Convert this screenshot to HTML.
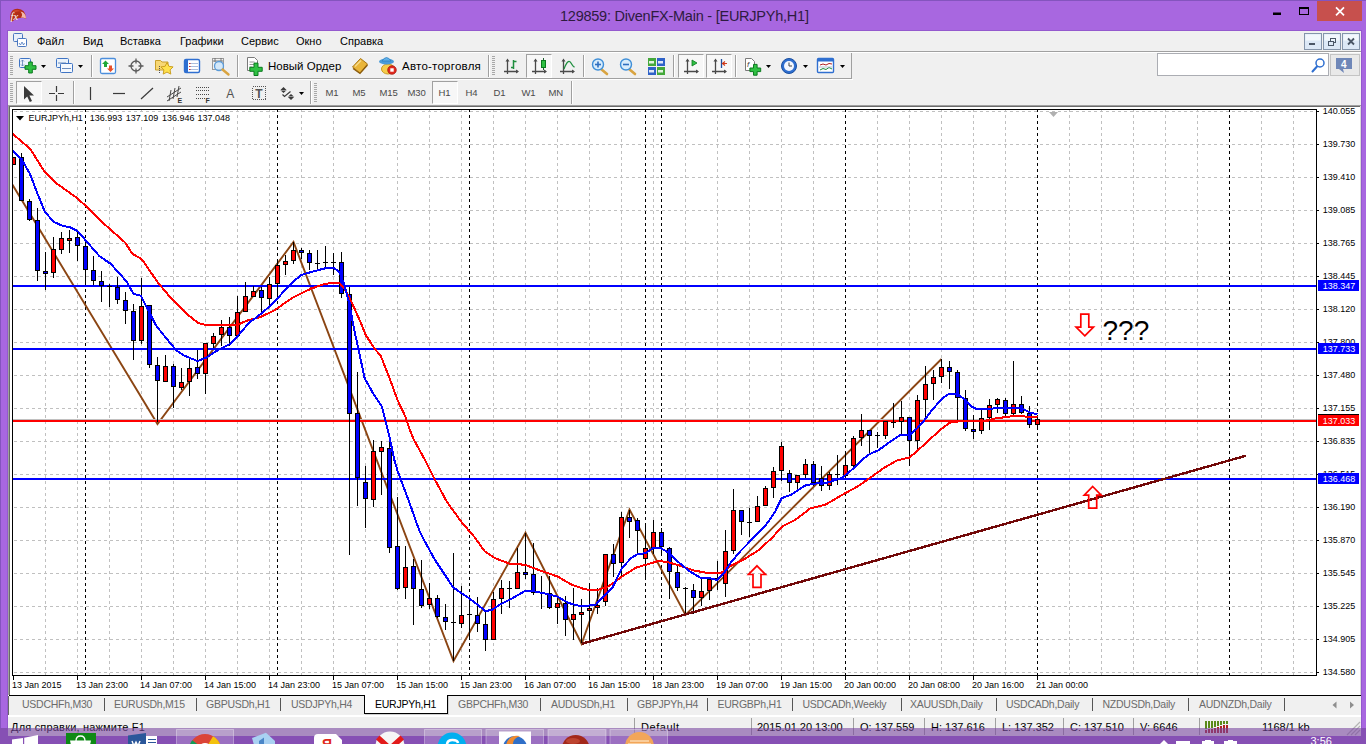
<!DOCTYPE html>
<html><head><meta charset="utf-8"><title>129859: DivenFX-Main - [EURJPYh,H1]</title>
<style>
html,body{margin:0;padding:0;background:#fff;}
body{width:1369px;height:744px;overflow:hidden;position:relative;font-family:"Liberation Sans",sans-serif;}
.a{position:absolute;}
.t{position:absolute;white-space:nowrap;line-height:1;}
#win{left:0;top:0;width:1366px;height:744px;background:#A867E0;}
#client{left:8px;top:31px;width:1353px;height:713px;background:#F0F0F0;}
.menu{font-size:11px;color:#000;top:36px;}
.tb{font-size:11.5px;color:#000;top:60.5px;}
.tf{font-size:9.5px;color:#4a4a4a;top:88px;margin-left:-0.6px;}
.tab{font-size:10.5px;color:#6b6b6b;top:699px;letter-spacing:-0.25px;}
.sep{position:absolute;width:1px;height:22px;background:#A0A0A0;box-shadow:1px 0 0 #fff;}
.tsep{position:absolute;width:1px;height:13px;top:698px;background:#555;}
.st{font-size:11px;color:#000;top:722px;}
.ssep{position:absolute;width:1px;height:17px;top:718px;background:#A0A0A0;}
.grip{position:absolute;width:3px;height:20px;background:repeating-linear-gradient(#A8A8A8 0 1px,#F0F0F0 1px 2px);}
.pressed{position:absolute;border:1px solid #A0A0A0;border-right-color:#fff;border-bottom-color:#fff;background:#F7F7F7;box-sizing:border-box;}
svg{position:absolute;left:0;top:0;overflow:visible;}
</style></head><body>

<div id="win" class="a"></div>
<div class="a" style="left:0;top:0;width:1366px;height:1px;background:#8454BE"></div>
<div class="t" id="title" style="left:560px;top:9px;font-size:14.5px;color:#2E1B40;letter-spacing:-0.24px">129859: DivenFX-Main - [EURJPYh,H1]</div>
<div class="a" style="left:1317px;top:1px;width:45px;height:20px;background:#C7504D"></div>
<div class="a" style="left:0;top:0;width:1px;height:744px;background:#8454BE"></div>
<div class="a" style="left:7px;top:30px;width:1355px;height:714px;background:#9459CE"></div>
<div id="client" class="a"></div>
<div class="a" style="left:8px;top:51px;width:1353px;height:1px;background:#A0A0A0"></div>
<div class="a" style="left:8px;top:52px;width:1353px;height:1px;background:#fff"></div>
<div class="t menu" style="left:37px">Файл</div>
<div class="t menu" style="left:83px">Вид</div>
<div class="t menu" style="left:120px">Вставка</div>
<div class="t menu" style="left:180px">Графики</div>
<div class="t menu" style="left:241px">Сервис</div>
<div class="t menu" style="left:296px">Окно</div>
<div class="t menu" style="left:340px">Справка</div>
<div class="a" style="left:8px;top:78px;width:844px;height:1px;background:#A0A0A0"></div>
<div class="a" style="left:8px;top:79px;width:845px;height:1px;background:#fff"></div>
<div class="a" style="left:851px;top:53px;width:1px;height:26px;background:#A0A0A0"></div>
<div class="grip" style="left:10px;top:56px"></div>
<div class="grip" style="left:492px;top:56px"></div>
<div class="sep" style="left:91px;top:55px"></div>
<div class="sep" style="left:237px;top:55px"></div>
<div class="sep" style="left:488px;top:55px"></div>
<div class="sep" style="left:583px;top:55px"></div>
<div class="sep" style="left:673px;top:55px"></div>
<div class="sep" style="left:735px;top:55px"></div>
<div class="pressed" style="left:526px;top:54px;width:26px;height:24px"></div>
<div class="pressed" style="left:678px;top:54px;width:26px;height:24px"></div>
<div class="pressed" style="left:706px;top:54px;width:26px;height:24px"></div>
<div class="t tb" style="left:268px">Новый Ордер</div>
<div class="t tb" style="left:402px;letter-spacing:0.24px">Авто-торговля</div>
<div class="a" style="left:1157px;top:53px;width:172px;height:23px;background:#fff;border:1px solid #ABADB3;box-sizing:border-box"></div>
<div class="a" style="left:1330px;top:54px;width:30px;height:22px;background:#E9E9E9;border:1px solid #C4C4C4;box-sizing:border-box"></div>
<div class="grip" style="left:10px;top:83px"></div>
<div class="grip" style="left:314px;top:83px"></div>
<div class="sep" style="left:73px;top:81px;height:23px"></div>
<div class="sep" style="left:310px;top:81px;height:23px"></div>
<div class="sep" style="left:571px;top:81px;height:23px"></div>
<div class="pressed" style="left:16px;top:81px;width:26px;height:23px"></div>
<div class="pressed" style="left:432px;top:81px;width:26px;height:23px"></div>
<div class="t tf" style="left:326px">M1</div>
<div class="t tf" style="left:353px">M5</div>
<div class="t tf" style="left:380px">M15</div>
<div class="t tf" style="left:408px">M30</div>
<div class="t tf" style="left:439px">H1</div>
<div class="t tf" style="left:466px">H4</div>
<div class="t tf" style="left:494px">D1</div>
<div class="t tf" style="left:522px">W1</div>
<div class="t tf" style="left:549px">MN</div>
<svg width="1369" height="744" viewBox="0 0 1369 744" font-family="Liberation Sans, sans-serif">
<g shape-rendering="crispEdges">
<rect x="8" y="105" width="1353" height="591" fill="#fff"/>
<rect x="8" y="105" width="1353" height="1" fill="#A0A0A0"/>
<rect x="9" y="106" width="1351" height="1" fill="#696969"/>
<rect x="8" y="105" width="1" height="590" fill="#A0A0A0"/>
<rect x="9" y="106" width="1" height="589" fill="#696969"/>
<rect x="1360" y="106" width="1" height="589" fill="#D8D8D8"/>
<rect x="9" y="695" width="1352" height="1" fill="#000"/>
<line x1="14" y1="111.5" x2="1316" y2="111.5" stroke="#C0C0C0" stroke-width="1" stroke-dasharray="3 3"/>
<line x1="14" y1="144.5" x2="1316" y2="144.5" stroke="#C0C0C0" stroke-width="1" stroke-dasharray="3 3"/>
<line x1="14" y1="177.5" x2="1316" y2="177.5" stroke="#C0C0C0" stroke-width="1" stroke-dasharray="3 3"/>
<line x1="14" y1="210.5" x2="1316" y2="210.5" stroke="#C0C0C0" stroke-width="1" stroke-dasharray="3 3"/>
<line x1="14" y1="243.5" x2="1316" y2="243.5" stroke="#C0C0C0" stroke-width="1" stroke-dasharray="3 3"/>
<line x1="14" y1="276.5" x2="1316" y2="276.5" stroke="#C0C0C0" stroke-width="1" stroke-dasharray="3 3"/>
<line x1="14" y1="309.5" x2="1316" y2="309.5" stroke="#C0C0C0" stroke-width="1" stroke-dasharray="3 3"/>
<line x1="14" y1="342.5" x2="1316" y2="342.5" stroke="#C0C0C0" stroke-width="1" stroke-dasharray="3 3"/>
<line x1="14" y1="375.5" x2="1316" y2="375.5" stroke="#C0C0C0" stroke-width="1" stroke-dasharray="3 3"/>
<line x1="14" y1="408.5" x2="1316" y2="408.5" stroke="#C0C0C0" stroke-width="1" stroke-dasharray="3 3"/>
<line x1="14" y1="441.5" x2="1316" y2="441.5" stroke="#C0C0C0" stroke-width="1" stroke-dasharray="3 3"/>
<line x1="14" y1="474.5" x2="1316" y2="474.5" stroke="#C0C0C0" stroke-width="1" stroke-dasharray="3 3"/>
<line x1="14" y1="507.5" x2="1316" y2="507.5" stroke="#C0C0C0" stroke-width="1" stroke-dasharray="3 3"/>
<line x1="14" y1="540.5" x2="1316" y2="540.5" stroke="#C0C0C0" stroke-width="1" stroke-dasharray="3 3"/>
<line x1="14" y1="573.5" x2="1316" y2="573.5" stroke="#C0C0C0" stroke-width="1" stroke-dasharray="3 3"/>
<line x1="14" y1="606.5" x2="1316" y2="606.5" stroke="#C0C0C0" stroke-width="1" stroke-dasharray="3 3"/>
<line x1="14" y1="639.5" x2="1316" y2="639.5" stroke="#C0C0C0" stroke-width="1" stroke-dasharray="3 3"/>
<line x1="14" y1="672.5" x2="1316" y2="672.5" stroke="#C0C0C0" stroke-width="1" stroke-dasharray="3 3"/>
<line x1="45.5" y1="109" x2="45.5" y2="675" stroke="#C0C0C0" stroke-width="1" stroke-dasharray="3 3"/>
<line x1="77.5" y1="109" x2="77.5" y2="675" stroke="#C0C0C0" stroke-width="1" stroke-dasharray="3 3"/>
<line x1="109.5" y1="109" x2="109.5" y2="675" stroke="#C0C0C0" stroke-width="1" stroke-dasharray="3 3"/>
<line x1="141.5" y1="109" x2="141.5" y2="675" stroke="#C0C0C0" stroke-width="1" stroke-dasharray="3 3"/>
<line x1="173.5" y1="109" x2="173.5" y2="675" stroke="#C0C0C0" stroke-width="1" stroke-dasharray="3 3"/>
<line x1="205.5" y1="109" x2="205.5" y2="675" stroke="#C0C0C0" stroke-width="1" stroke-dasharray="3 3"/>
<line x1="237.5" y1="109" x2="237.5" y2="675" stroke="#C0C0C0" stroke-width="1" stroke-dasharray="3 3"/>
<line x1="269.5" y1="109" x2="269.5" y2="675" stroke="#C0C0C0" stroke-width="1" stroke-dasharray="3 3"/>
<line x1="301.5" y1="109" x2="301.5" y2="675" stroke="#C0C0C0" stroke-width="1" stroke-dasharray="3 3"/>
<line x1="333.5" y1="109" x2="333.5" y2="675" stroke="#C0C0C0" stroke-width="1" stroke-dasharray="3 3"/>
<line x1="365.5" y1="109" x2="365.5" y2="675" stroke="#C0C0C0" stroke-width="1" stroke-dasharray="3 3"/>
<line x1="397.5" y1="109" x2="397.5" y2="675" stroke="#C0C0C0" stroke-width="1" stroke-dasharray="3 3"/>
<line x1="429.5" y1="109" x2="429.5" y2="675" stroke="#C0C0C0" stroke-width="1" stroke-dasharray="3 3"/>
<line x1="461.5" y1="109" x2="461.5" y2="675" stroke="#C0C0C0" stroke-width="1" stroke-dasharray="3 3"/>
<line x1="493.5" y1="109" x2="493.5" y2="675" stroke="#C0C0C0" stroke-width="1" stroke-dasharray="3 3"/>
<line x1="525.5" y1="109" x2="525.5" y2="675" stroke="#C0C0C0" stroke-width="1" stroke-dasharray="3 3"/>
<line x1="557.5" y1="109" x2="557.5" y2="675" stroke="#C0C0C0" stroke-width="1" stroke-dasharray="3 3"/>
<line x1="589.5" y1="109" x2="589.5" y2="675" stroke="#C0C0C0" stroke-width="1" stroke-dasharray="3 3"/>
<line x1="621.5" y1="109" x2="621.5" y2="675" stroke="#C0C0C0" stroke-width="1" stroke-dasharray="3 3"/>
<line x1="653.5" y1="109" x2="653.5" y2="675" stroke="#C0C0C0" stroke-width="1" stroke-dasharray="3 3"/>
<line x1="685.5" y1="109" x2="685.5" y2="675" stroke="#C0C0C0" stroke-width="1" stroke-dasharray="3 3"/>
<line x1="717.5" y1="109" x2="717.5" y2="675" stroke="#C0C0C0" stroke-width="1" stroke-dasharray="3 3"/>
<line x1="749.5" y1="109" x2="749.5" y2="675" stroke="#C0C0C0" stroke-width="1" stroke-dasharray="3 3"/>
<line x1="781.5" y1="109" x2="781.5" y2="675" stroke="#C0C0C0" stroke-width="1" stroke-dasharray="3 3"/>
<line x1="813.5" y1="109" x2="813.5" y2="675" stroke="#C0C0C0" stroke-width="1" stroke-dasharray="3 3"/>
<line x1="845.5" y1="109" x2="845.5" y2="675" stroke="#C0C0C0" stroke-width="1" stroke-dasharray="3 3"/>
<line x1="877.5" y1="109" x2="877.5" y2="675" stroke="#C0C0C0" stroke-width="1" stroke-dasharray="3 3"/>
<line x1="909.5" y1="109" x2="909.5" y2="675" stroke="#C0C0C0" stroke-width="1" stroke-dasharray="3 3"/>
<line x1="941.5" y1="109" x2="941.5" y2="675" stroke="#C0C0C0" stroke-width="1" stroke-dasharray="3 3"/>
<line x1="973.5" y1="109" x2="973.5" y2="675" stroke="#C0C0C0" stroke-width="1" stroke-dasharray="3 3"/>
<line x1="1005.5" y1="109" x2="1005.5" y2="675" stroke="#C0C0C0" stroke-width="1" stroke-dasharray="3 3"/>
<line x1="1037.5" y1="109" x2="1037.5" y2="675" stroke="#C0C0C0" stroke-width="1" stroke-dasharray="3 3"/>
<line x1="1069.5" y1="109" x2="1069.5" y2="675" stroke="#C0C0C0" stroke-width="1" stroke-dasharray="3 3"/>
<line x1="1101.5" y1="109" x2="1101.5" y2="675" stroke="#C0C0C0" stroke-width="1" stroke-dasharray="3 3"/>
<line x1="1133.5" y1="109" x2="1133.5" y2="675" stroke="#C0C0C0" stroke-width="1" stroke-dasharray="3 3"/>
<line x1="1165.5" y1="109" x2="1165.5" y2="675" stroke="#C0C0C0" stroke-width="1" stroke-dasharray="3 3"/>
<line x1="1197.5" y1="109" x2="1197.5" y2="675" stroke="#C0C0C0" stroke-width="1" stroke-dasharray="3 3"/>
<line x1="1229.5" y1="109" x2="1229.5" y2="675" stroke="#C0C0C0" stroke-width="1" stroke-dasharray="3 3"/>
<line x1="1261.5" y1="109" x2="1261.5" y2="675" stroke="#C0C0C0" stroke-width="1" stroke-dasharray="3 3"/>
<line x1="1293.5" y1="109" x2="1293.5" y2="675" stroke="#C0C0C0" stroke-width="1" stroke-dasharray="3 3"/>
<line x1="85.5" y1="109" x2="85.5" y2="675" stroke="#000" stroke-width="1" stroke-dasharray="3 3"/>
<line x1="277.5" y1="109" x2="277.5" y2="675" stroke="#000" stroke-width="1" stroke-dasharray="3 3"/>
<line x1="469.5" y1="109" x2="469.5" y2="675" stroke="#000" stroke-width="1" stroke-dasharray="3 3"/>
<line x1="645.5" y1="109" x2="645.5" y2="675" stroke="#000" stroke-width="1" stroke-dasharray="3 3"/>
<line x1="661.5" y1="109" x2="661.5" y2="675" stroke="#000" stroke-width="1" stroke-dasharray="3 3"/>
<line x1="845.5" y1="109" x2="845.5" y2="675" stroke="#000" stroke-width="1" stroke-dasharray="3 3"/>
<line x1="1037.5" y1="109" x2="1037.5" y2="675" stroke="#000" stroke-width="1" stroke-dasharray="3 3"/>
<line x1="1229.5" y1="109" x2="1229.5" y2="675" stroke="#000" stroke-width="1" stroke-dasharray="3 3"/>
</g>
<clipPath id="cc"><rect x="13" y="110" width="1303" height="565"/></clipPath>
<g clip-path="url(#cc)">
<polyline fill="none" stroke="#8B4513" stroke-width="1.9" stroke-linejoin="miter" points="12.0,184.0 157.5,424.0 293.5,242.0 453.5,661.0 525.5,532.8 581.6,643.8 629.5,509.5 685.5,615.0 941.5,359.0"/>
<rect x="13" y="419" width="1303" height="1" fill="#C0C0C0" shape-rendering="crispEdges"/>
<g shape-rendering="crispEdges">
<rect x="13" y="285" width="1303" height="2" fill="#0000FF"/>
<rect x="13" y="348" width="1303" height="2" fill="#0000FF"/>
<rect x="13" y="478" width="1303" height="2" fill="#0000FF"/>
<rect x="13" y="420" width="1303" height="2" fill="#FF0000"/>
</g>
<g shape-rendering="crispEdges">
<rect x="13" y="157" width="1" height="8" fill="#000"/>
<rect x="11" y="157" width="5" height="8" fill="#000"/>
<rect x="12" y="158" width="3" height="6" fill="#FF0000"/>
<rect x="21" y="153" width="1" height="48" fill="#000"/>
<rect x="19" y="157" width="5" height="44" fill="#000"/>
<rect x="20" y="158" width="3" height="42" fill="#0000FF"/>
<rect x="29" y="199" width="1" height="22" fill="#000"/>
<rect x="27" y="201" width="5" height="19" fill="#000"/>
<rect x="28" y="202" width="3" height="17" fill="#0000FF"/>
<rect x="37" y="208" width="1" height="73" fill="#000"/>
<rect x="35" y="220" width="5" height="51" fill="#000"/>
<rect x="36" y="221" width="3" height="49" fill="#0000FF"/>
<rect x="45" y="252" width="1" height="38" fill="#000"/>
<rect x="43" y="271" width="5" height="3" fill="#000"/>
<rect x="44" y="272" width="3" height="1" fill="#0000FF"/>
<rect x="53" y="237" width="1" height="41" fill="#000"/>
<rect x="51" y="249" width="5" height="24" fill="#000"/>
<rect x="52" y="250" width="3" height="22" fill="#FF0000"/>
<rect x="61" y="232" width="1" height="22" fill="#000"/>
<rect x="59" y="238" width="5" height="12" fill="#000"/>
<rect x="60" y="239" width="3" height="10" fill="#FF0000"/>
<rect x="69" y="230" width="1" height="23" fill="#000"/>
<rect x="67" y="238" width="5" height="3" fill="#000"/>
<rect x="68" y="239" width="3" height="1" fill="#FF0000"/>
<rect x="77" y="232" width="1" height="29" fill="#000"/>
<rect x="75" y="237" width="5" height="9" fill="#000"/>
<rect x="76" y="238" width="3" height="7" fill="#0000FF"/>
<rect x="85" y="240" width="1" height="45" fill="#000"/>
<rect x="83" y="246" width="5" height="24" fill="#000"/>
<rect x="84" y="247" width="3" height="22" fill="#0000FF"/>
<rect x="93" y="256" width="1" height="29" fill="#000"/>
<rect x="91" y="270" width="5" height="11" fill="#000"/>
<rect x="92" y="271" width="3" height="9" fill="#0000FF"/>
<rect x="101" y="271" width="1" height="31" fill="#000"/>
<rect x="99" y="281" width="5" height="5" fill="#000"/>
<rect x="100" y="282" width="3" height="3" fill="#0000FF"/>
<rect x="109" y="284" width="1" height="23" fill="#000"/>
<rect x="107" y="286" width="5" height="1" fill="#000"/>
<rect x="117" y="277" width="1" height="27" fill="#000"/>
<rect x="115" y="287" width="5" height="13" fill="#000"/>
<rect x="116" y="288" width="3" height="11" fill="#0000FF"/>
<rect x="125" y="292" width="1" height="32" fill="#000"/>
<rect x="123" y="300" width="5" height="11" fill="#000"/>
<rect x="124" y="301" width="3" height="9" fill="#0000FF"/>
<rect x="133" y="304" width="1" height="56" fill="#000"/>
<rect x="131" y="311" width="5" height="30" fill="#000"/>
<rect x="132" y="312" width="3" height="28" fill="#0000FF"/>
<rect x="141" y="278" width="1" height="66" fill="#000"/>
<rect x="139" y="306" width="5" height="35" fill="#000"/>
<rect x="140" y="307" width="3" height="33" fill="#FF0000"/>
<rect x="149" y="305" width="1" height="63" fill="#000"/>
<rect x="147" y="305" width="5" height="60" fill="#000"/>
<rect x="148" y="306" width="3" height="58" fill="#0000FF"/>
<rect x="157" y="357" width="1" height="65" fill="#000"/>
<rect x="155" y="365" width="5" height="16" fill="#000"/>
<rect x="156" y="366" width="3" height="14" fill="#0000FF"/>
<rect x="165" y="355" width="1" height="27" fill="#000"/>
<rect x="163" y="366" width="5" height="16" fill="#000"/>
<rect x="164" y="367" width="3" height="14" fill="#FF0000"/>
<rect x="173" y="364" width="1" height="44" fill="#000"/>
<rect x="171" y="366" width="5" height="21" fill="#000"/>
<rect x="172" y="367" width="3" height="19" fill="#0000FF"/>
<rect x="181" y="368" width="1" height="22" fill="#000"/>
<rect x="179" y="382" width="5" height="6" fill="#000"/>
<rect x="180" y="383" width="3" height="4" fill="#FF0000"/>
<rect x="189" y="358" width="1" height="38" fill="#000"/>
<rect x="187" y="368" width="5" height="14" fill="#000"/>
<rect x="188" y="369" width="3" height="12" fill="#FF0000"/>
<rect x="197" y="350" width="1" height="29" fill="#000"/>
<rect x="195" y="367" width="5" height="7" fill="#000"/>
<rect x="196" y="368" width="3" height="5" fill="#0000FF"/>
<rect x="205" y="343" width="1" height="51" fill="#000"/>
<rect x="203" y="343" width="5" height="31" fill="#000"/>
<rect x="204" y="344" width="3" height="29" fill="#FF0000"/>
<rect x="213" y="333" width="1" height="15" fill="#000"/>
<rect x="211" y="336" width="5" height="8" fill="#000"/>
<rect x="212" y="337" width="3" height="6" fill="#FF0000"/>
<rect x="221" y="320" width="1" height="26" fill="#000"/>
<rect x="219" y="327" width="5" height="8" fill="#000"/>
<rect x="220" y="328" width="3" height="6" fill="#FF0000"/>
<rect x="229" y="317" width="1" height="29" fill="#000"/>
<rect x="227" y="327" width="5" height="9" fill="#000"/>
<rect x="228" y="328" width="3" height="7" fill="#0000FF"/>
<rect x="237" y="296" width="1" height="40" fill="#000"/>
<rect x="235" y="312" width="5" height="24" fill="#000"/>
<rect x="236" y="313" width="3" height="22" fill="#FF0000"/>
<rect x="245" y="282" width="1" height="30" fill="#000"/>
<rect x="243" y="296" width="5" height="16" fill="#000"/>
<rect x="244" y="297" width="3" height="14" fill="#FF0000"/>
<rect x="253" y="286" width="1" height="11" fill="#000"/>
<rect x="251" y="291" width="5" height="6" fill="#000"/>
<rect x="252" y="292" width="3" height="4" fill="#FF0000"/>
<rect x="261" y="287" width="1" height="27" fill="#000"/>
<rect x="259" y="290" width="5" height="8" fill="#000"/>
<rect x="260" y="291" width="3" height="6" fill="#0000FF"/>
<rect x="269" y="277" width="1" height="28" fill="#000"/>
<rect x="267" y="284" width="5" height="15" fill="#000"/>
<rect x="268" y="285" width="3" height="13" fill="#FF0000"/>
<rect x="277" y="259" width="1" height="38" fill="#000"/>
<rect x="275" y="265" width="5" height="19" fill="#000"/>
<rect x="276" y="266" width="3" height="17" fill="#FF0000"/>
<rect x="285" y="255" width="1" height="20" fill="#000"/>
<rect x="283" y="261" width="5" height="4" fill="#000"/>
<rect x="284" y="262" width="3" height="2" fill="#FF0000"/>
<rect x="293" y="242" width="1" height="22" fill="#000"/>
<rect x="291" y="250" width="5" height="11" fill="#000"/>
<rect x="292" y="251" width="3" height="9" fill="#FF0000"/>
<rect x="301" y="248" width="1" height="11" fill="#000"/>
<rect x="299" y="250" width="5" height="3" fill="#000"/>
<rect x="300" y="251" width="3" height="1" fill="#0000FF"/>
<rect x="309" y="250" width="1" height="20" fill="#000"/>
<rect x="307" y="253" width="5" height="10" fill="#000"/>
<rect x="308" y="254" width="3" height="8" fill="#0000FF"/>
<rect x="317" y="250" width="1" height="19" fill="#000"/>
<rect x="315" y="263" width="5" height="1" fill="#000"/>
<rect x="325" y="246" width="1" height="22" fill="#000"/>
<rect x="323" y="262" width="5" height="1" fill="#000"/>
<rect x="333" y="253" width="1" height="22" fill="#000"/>
<rect x="331" y="262" width="5" height="1" fill="#000"/>
<rect x="341" y="252" width="1" height="46" fill="#000"/>
<rect x="339" y="262" width="5" height="32" fill="#000"/>
<rect x="340" y="263" width="3" height="30" fill="#0000FF"/>
<rect x="349" y="287" width="1" height="268" fill="#000"/>
<rect x="347" y="294" width="5" height="120" fill="#000"/>
<rect x="348" y="295" width="3" height="118" fill="#0000FF"/>
<rect x="357" y="372" width="1" height="134" fill="#000"/>
<rect x="355" y="413" width="5" height="65" fill="#000"/>
<rect x="356" y="414" width="3" height="63" fill="#0000FF"/>
<rect x="365" y="466" width="1" height="62" fill="#000"/>
<rect x="363" y="482" width="5" height="17" fill="#000"/>
<rect x="364" y="483" width="3" height="15" fill="#0000FF"/>
<rect x="373" y="440" width="1" height="67" fill="#000"/>
<rect x="371" y="451" width="5" height="49" fill="#000"/>
<rect x="372" y="452" width="3" height="47" fill="#FF0000"/>
<rect x="381" y="441" width="1" height="54" fill="#000"/>
<rect x="379" y="447" width="5" height="5" fill="#000"/>
<rect x="380" y="448" width="3" height="3" fill="#FF0000"/>
<rect x="389" y="442" width="1" height="111" fill="#000"/>
<rect x="387" y="448" width="5" height="100" fill="#000"/>
<rect x="388" y="449" width="3" height="98" fill="#0000FF"/>
<rect x="397" y="497" width="1" height="93" fill="#000"/>
<rect x="395" y="546" width="5" height="43" fill="#000"/>
<rect x="396" y="547" width="3" height="41" fill="#0000FF"/>
<rect x="405" y="546" width="1" height="53" fill="#000"/>
<rect x="403" y="567" width="5" height="21" fill="#000"/>
<rect x="404" y="568" width="3" height="19" fill="#FF0000"/>
<rect x="413" y="559" width="1" height="66" fill="#000"/>
<rect x="411" y="566" width="5" height="23" fill="#000"/>
<rect x="412" y="567" width="3" height="21" fill="#0000FF"/>
<rect x="421" y="560" width="1" height="48" fill="#000"/>
<rect x="419" y="589" width="5" height="17" fill="#000"/>
<rect x="420" y="590" width="3" height="15" fill="#0000FF"/>
<rect x="429" y="583" width="1" height="26" fill="#000"/>
<rect x="427" y="598" width="5" height="7" fill="#000"/>
<rect x="428" y="599" width="3" height="5" fill="#FF0000"/>
<rect x="437" y="595" width="1" height="23" fill="#000"/>
<rect x="435" y="598" width="5" height="19" fill="#000"/>
<rect x="436" y="599" width="3" height="17" fill="#0000FF"/>
<rect x="445" y="604" width="1" height="26" fill="#000"/>
<rect x="443" y="617" width="5" height="5" fill="#000"/>
<rect x="444" y="618" width="3" height="3" fill="#0000FF"/>
<rect x="453" y="553" width="1" height="108" fill="#000"/>
<rect x="451" y="622" width="5" height="1" fill="#000"/>
<rect x="461" y="586" width="1" height="42" fill="#000"/>
<rect x="459" y="615" width="5" height="9" fill="#000"/>
<rect x="460" y="616" width="3" height="7" fill="#FF0000"/>
<rect x="469" y="595" width="1" height="45" fill="#000"/>
<rect x="467" y="614" width="5" height="1" fill="#000"/>
<rect x="477" y="597" width="1" height="35" fill="#000"/>
<rect x="475" y="615" width="5" height="9" fill="#000"/>
<rect x="476" y="616" width="3" height="7" fill="#0000FF"/>
<rect x="485" y="610" width="1" height="41" fill="#000"/>
<rect x="483" y="624" width="5" height="16" fill="#000"/>
<rect x="484" y="625" width="3" height="14" fill="#0000FF"/>
<rect x="493" y="592" width="1" height="48" fill="#000"/>
<rect x="491" y="599" width="5" height="41" fill="#000"/>
<rect x="492" y="600" width="3" height="39" fill="#FF0000"/>
<rect x="501" y="580" width="1" height="34" fill="#000"/>
<rect x="499" y="588" width="5" height="11" fill="#000"/>
<rect x="500" y="589" width="3" height="9" fill="#FF0000"/>
<rect x="509" y="581" width="1" height="27" fill="#000"/>
<rect x="507" y="588" width="5" height="1" fill="#000"/>
<rect x="517" y="548" width="1" height="41" fill="#000"/>
<rect x="515" y="572" width="5" height="17" fill="#000"/>
<rect x="516" y="573" width="3" height="15" fill="#FF0000"/>
<rect x="525" y="533" width="1" height="46" fill="#000"/>
<rect x="523" y="572" width="5" height="3" fill="#000"/>
<rect x="524" y="573" width="3" height="1" fill="#0000FF"/>
<rect x="533" y="543" width="1" height="52" fill="#000"/>
<rect x="531" y="574" width="5" height="19" fill="#000"/>
<rect x="532" y="575" width="3" height="17" fill="#0000FF"/>
<rect x="541" y="576" width="1" height="33" fill="#000"/>
<rect x="539" y="592" width="5" height="1" fill="#000"/>
<rect x="549" y="576" width="1" height="33" fill="#000"/>
<rect x="547" y="593" width="5" height="15" fill="#000"/>
<rect x="548" y="594" width="3" height="13" fill="#0000FF"/>
<rect x="557" y="597" width="1" height="27" fill="#000"/>
<rect x="555" y="603" width="5" height="5" fill="#000"/>
<rect x="556" y="604" width="3" height="3" fill="#FF0000"/>
<rect x="565" y="596" width="1" height="40" fill="#000"/>
<rect x="563" y="603" width="5" height="17" fill="#000"/>
<rect x="564" y="604" width="3" height="15" fill="#0000FF"/>
<rect x="573" y="588" width="1" height="52" fill="#000"/>
<rect x="571" y="614" width="5" height="6" fill="#000"/>
<rect x="572" y="615" width="3" height="4" fill="#FF0000"/>
<rect x="581" y="599" width="1" height="44" fill="#000"/>
<rect x="579" y="612" width="5" height="3" fill="#000"/>
<rect x="580" y="613" width="3" height="1" fill="#FF0000"/>
<rect x="589" y="583" width="1" height="59" fill="#000"/>
<rect x="587" y="608" width="5" height="3" fill="#000"/>
<rect x="588" y="609" width="3" height="1" fill="#FF0000"/>
<rect x="597" y="588" width="1" height="26" fill="#000"/>
<rect x="595" y="605" width="5" height="3" fill="#000"/>
<rect x="596" y="606" width="3" height="1" fill="#FF0000"/>
<rect x="605" y="554" width="1" height="52" fill="#000"/>
<rect x="603" y="554" width="5" height="48" fill="#000"/>
<rect x="604" y="555" width="3" height="46" fill="#FF0000"/>
<rect x="613" y="544" width="1" height="33" fill="#000"/>
<rect x="611" y="554" width="5" height="10" fill="#000"/>
<rect x="612" y="555" width="3" height="8" fill="#0000FF"/>
<rect x="621" y="512" width="1" height="64" fill="#000"/>
<rect x="619" y="517" width="5" height="46" fill="#000"/>
<rect x="620" y="518" width="3" height="44" fill="#FF0000"/>
<rect x="629" y="510" width="1" height="28" fill="#000"/>
<rect x="627" y="517" width="5" height="5" fill="#000"/>
<rect x="628" y="518" width="3" height="3" fill="#0000FF"/>
<rect x="637" y="518" width="1" height="36" fill="#000"/>
<rect x="635" y="520" width="5" height="11" fill="#000"/>
<rect x="636" y="521" width="3" height="9" fill="#0000FF"/>
<rect x="645" y="523" width="1" height="56" fill="#000"/>
<rect x="643" y="548" width="5" height="11" fill="#000"/>
<rect x="644" y="549" width="3" height="9" fill="#FF0000"/>
<rect x="653" y="520" width="1" height="34" fill="#000"/>
<rect x="651" y="532" width="5" height="16" fill="#000"/>
<rect x="652" y="533" width="3" height="14" fill="#FF0000"/>
<rect x="661" y="528" width="1" height="27" fill="#000"/>
<rect x="659" y="532" width="5" height="15" fill="#000"/>
<rect x="660" y="533" width="3" height="13" fill="#0000FF"/>
<rect x="669" y="547" width="1" height="52" fill="#000"/>
<rect x="667" y="548" width="5" height="24" fill="#000"/>
<rect x="668" y="549" width="3" height="22" fill="#0000FF"/>
<rect x="677" y="566" width="1" height="25" fill="#000"/>
<rect x="675" y="572" width="5" height="16" fill="#000"/>
<rect x="676" y="573" width="3" height="14" fill="#0000FF"/>
<rect x="685" y="587" width="1" height="28" fill="#000"/>
<rect x="683" y="588" width="5" height="1" fill="#000"/>
<rect x="693" y="584" width="1" height="30" fill="#000"/>
<rect x="691" y="590" width="5" height="8" fill="#000"/>
<rect x="692" y="591" width="3" height="6" fill="#0000FF"/>
<rect x="701" y="578" width="1" height="28" fill="#000"/>
<rect x="699" y="591" width="5" height="7" fill="#000"/>
<rect x="700" y="592" width="3" height="5" fill="#FF0000"/>
<rect x="709" y="579" width="1" height="21" fill="#000"/>
<rect x="707" y="579" width="5" height="12" fill="#000"/>
<rect x="708" y="580" width="3" height="10" fill="#FF0000"/>
<rect x="717" y="561" width="1" height="29" fill="#000"/>
<rect x="715" y="578" width="5" height="1" fill="#000"/>
<rect x="725" y="530" width="1" height="67" fill="#000"/>
<rect x="723" y="551" width="5" height="33" fill="#000"/>
<rect x="724" y="552" width="3" height="31" fill="#FF0000"/>
<rect x="733" y="489" width="1" height="65" fill="#000"/>
<rect x="731" y="510" width="5" height="41" fill="#000"/>
<rect x="732" y="511" width="3" height="39" fill="#FF0000"/>
<rect x="741" y="510" width="1" height="25" fill="#000"/>
<rect x="739" y="510" width="5" height="12" fill="#000"/>
<rect x="740" y="511" width="3" height="10" fill="#0000FF"/>
<rect x="749" y="508" width="1" height="29" fill="#000"/>
<rect x="747" y="522" width="5" height="1" fill="#000"/>
<rect x="757" y="496" width="1" height="26" fill="#000"/>
<rect x="755" y="506" width="5" height="16" fill="#000"/>
<rect x="756" y="507" width="3" height="14" fill="#FF0000"/>
<rect x="765" y="486" width="1" height="20" fill="#000"/>
<rect x="763" y="488" width="5" height="18" fill="#000"/>
<rect x="764" y="489" width="3" height="16" fill="#FF0000"/>
<rect x="773" y="467" width="1" height="31" fill="#000"/>
<rect x="771" y="471" width="5" height="17" fill="#000"/>
<rect x="772" y="472" width="3" height="15" fill="#FF0000"/>
<rect x="781" y="442" width="1" height="39" fill="#000"/>
<rect x="779" y="446" width="5" height="25" fill="#000"/>
<rect x="780" y="447" width="3" height="23" fill="#FF0000"/>
<rect x="789" y="470" width="1" height="22" fill="#000"/>
<rect x="787" y="473" width="5" height="10" fill="#000"/>
<rect x="788" y="474" width="3" height="8" fill="#0000FF"/>
<rect x="797" y="475" width="1" height="14" fill="#000"/>
<rect x="795" y="475" width="5" height="8" fill="#000"/>
<rect x="796" y="476" width="3" height="6" fill="#FF0000"/>
<rect x="805" y="459" width="1" height="19" fill="#000"/>
<rect x="803" y="464" width="5" height="11" fill="#000"/>
<rect x="804" y="465" width="3" height="9" fill="#FF0000"/>
<rect x="813" y="461" width="1" height="25" fill="#000"/>
<rect x="811" y="464" width="5" height="19" fill="#000"/>
<rect x="812" y="465" width="3" height="17" fill="#0000FF"/>
<rect x="821" y="466" width="1" height="25" fill="#000"/>
<rect x="819" y="478" width="5" height="8" fill="#000"/>
<rect x="820" y="479" width="3" height="6" fill="#0000FF"/>
<rect x="829" y="472" width="1" height="18" fill="#000"/>
<rect x="827" y="474" width="5" height="12" fill="#000"/>
<rect x="828" y="475" width="3" height="10" fill="#FF0000"/>
<rect x="837" y="455" width="1" height="30" fill="#000"/>
<rect x="835" y="474" width="5" height="1" fill="#000"/>
<rect x="845" y="451" width="1" height="25" fill="#000"/>
<rect x="843" y="465" width="5" height="11" fill="#000"/>
<rect x="844" y="466" width="3" height="9" fill="#FF0000"/>
<rect x="853" y="436" width="1" height="33" fill="#000"/>
<rect x="851" y="438" width="5" height="28" fill="#000"/>
<rect x="852" y="439" width="3" height="26" fill="#FF0000"/>
<rect x="861" y="414" width="1" height="32" fill="#000"/>
<rect x="859" y="430" width="5" height="8" fill="#000"/>
<rect x="860" y="431" width="3" height="6" fill="#FF0000"/>
<rect x="869" y="430" width="1" height="23" fill="#000"/>
<rect x="867" y="430" width="5" height="6" fill="#000"/>
<rect x="868" y="431" width="3" height="4" fill="#0000FF"/>
<rect x="877" y="432" width="1" height="16" fill="#000"/>
<rect x="875" y="435" width="5" height="1" fill="#000"/>
<rect x="885" y="421" width="1" height="18" fill="#000"/>
<rect x="883" y="421" width="5" height="15" fill="#000"/>
<rect x="884" y="422" width="3" height="13" fill="#FF0000"/>
<rect x="893" y="403" width="1" height="25" fill="#000"/>
<rect x="891" y="422" width="5" height="1" fill="#000"/>
<rect x="901" y="401" width="1" height="33" fill="#000"/>
<rect x="899" y="417" width="5" height="5" fill="#000"/>
<rect x="900" y="418" width="3" height="3" fill="#FF0000"/>
<rect x="909" y="417" width="1" height="49" fill="#000"/>
<rect x="907" y="417" width="5" height="24" fill="#000"/>
<rect x="908" y="418" width="3" height="22" fill="#0000FF"/>
<rect x="917" y="395" width="1" height="55" fill="#000"/>
<rect x="915" y="400" width="5" height="41" fill="#000"/>
<rect x="916" y="401" width="3" height="39" fill="#FF0000"/>
<rect x="925" y="366" width="1" height="52" fill="#000"/>
<rect x="923" y="384" width="5" height="16" fill="#000"/>
<rect x="924" y="385" width="3" height="14" fill="#FF0000"/>
<rect x="933" y="370" width="1" height="30" fill="#000"/>
<rect x="931" y="377" width="5" height="7" fill="#000"/>
<rect x="932" y="378" width="3" height="5" fill="#FF0000"/>
<rect x="941" y="359" width="1" height="24" fill="#000"/>
<rect x="939" y="367" width="5" height="10" fill="#000"/>
<rect x="940" y="368" width="3" height="8" fill="#FF0000"/>
<rect x="949" y="361" width="1" height="28" fill="#000"/>
<rect x="947" y="367" width="5" height="5" fill="#000"/>
<rect x="948" y="368" width="3" height="3" fill="#0000FF"/>
<rect x="957" y="370" width="1" height="50" fill="#000"/>
<rect x="955" y="372" width="5" height="26" fill="#000"/>
<rect x="956" y="373" width="3" height="24" fill="#0000FF"/>
<rect x="965" y="390" width="1" height="41" fill="#000"/>
<rect x="963" y="398" width="5" height="31" fill="#000"/>
<rect x="964" y="399" width="3" height="29" fill="#0000FF"/>
<rect x="973" y="415" width="1" height="24" fill="#000"/>
<rect x="971" y="429" width="5" height="3" fill="#000"/>
<rect x="972" y="430" width="3" height="1" fill="#0000FF"/>
<rect x="981" y="408" width="1" height="26" fill="#000"/>
<rect x="979" y="418" width="5" height="13" fill="#000"/>
<rect x="980" y="419" width="3" height="11" fill="#FF0000"/>
<rect x="989" y="399" width="1" height="31" fill="#000"/>
<rect x="987" y="405" width="5" height="13" fill="#000"/>
<rect x="988" y="406" width="3" height="11" fill="#FF0000"/>
<rect x="997" y="398" width="1" height="15" fill="#000"/>
<rect x="995" y="399" width="5" height="6" fill="#000"/>
<rect x="996" y="400" width="3" height="4" fill="#FF0000"/>
<rect x="1005" y="398" width="1" height="18" fill="#000"/>
<rect x="1003" y="400" width="5" height="14" fill="#000"/>
<rect x="1004" y="401" width="3" height="12" fill="#0000FF"/>
<rect x="1013" y="361" width="1" height="55" fill="#000"/>
<rect x="1011" y="404" width="5" height="10" fill="#000"/>
<rect x="1012" y="405" width="3" height="8" fill="#FF0000"/>
<rect x="1021" y="396" width="1" height="18" fill="#000"/>
<rect x="1019" y="404" width="5" height="9" fill="#000"/>
<rect x="1020" y="405" width="3" height="7" fill="#0000FF"/>
<rect x="1029" y="406" width="1" height="22" fill="#000"/>
<rect x="1027" y="413" width="5" height="12" fill="#000"/>
<rect x="1028" y="414" width="3" height="10" fill="#0000FF"/>
<rect x="1037" y="418" width="1" height="12" fill="#000"/>
<rect x="1035" y="419" width="5" height="6" fill="#000"/>
<rect x="1036" y="420" width="3" height="4" fill="#FF0000"/>
</g>
<polyline fill="none" stroke="#720808" stroke-width="2.4" shape-rendering="crispEdges" points="581.6,643.8 1245.7,455.8"/>
<polyline fill="none" stroke="#FF0000" stroke-width="2" stroke-linejoin="round" shape-rendering="crispEdges" points="12.0,133.3 30.3,149.0 45.0,172.4 56.0,183.0 77.0,198.0 90.6,210.4 105.0,224.7 125.0,242.4 132.6,254.0 141.8,259.2 158.2,283.0 172.9,300.3 185.6,313.0 198.4,323.2 205.7,325.0 222.0,325.5 236.8,325.0 247.7,320.4 259.7,317.4 274.3,310.4 292.6,297.6 310.8,288.8 321.8,284.8 331.0,283.0 340.0,283.4 345.5,290.3 352.9,305.0 360.2,321.4 365.7,335.0 374.8,348.8 381.0,356.4 390.3,380.2 397.6,400.3 405.0,415.8 410.4,431.4 414.0,440.0 425.0,460.0 434.2,478.4 447.0,502.0 461.6,522.2 474.4,536.9 484.4,551.0 495.3,558.3 510.0,563.8 524.6,564.7 539.2,570.2 557.5,576.5 572.0,584.8 584.9,589.3 596.0,590.4 608.9,586.2 621.7,576.7 636.3,567.5 649.0,563.9 658.2,561.0 667.4,562.0 680.2,565.7 693.0,570.3 707.6,573.0 720.4,573.5 731.3,565.7 744.0,559.3 758.8,550.0 771.5,538.3 782.5,526.4 795.3,519.8 810.0,508.6 826.0,504.4 842.0,495.0 858.4,486.0 871.2,477.0 884.0,467.9 896.8,460.6 909.5,457.5 918.7,449.6 929.7,439.5 940.6,429.5 949.7,422.7 962.5,420.9 984.5,420.9 995.4,418.5 1008.2,416.7 1017.4,415.8 1026.5,416.7 1037.5,417.0"/>
<polyline fill="none" stroke="#0000FF" stroke-width="2" stroke-linejoin="round" shape-rendering="crispEdges" points="12.0,149.7 22.0,160.0 30.0,174.0 37.6,194.0 45.0,212.0 54.0,222.0 63.0,226.0 70.5,227.4 78.0,231.4 85.0,239.6 99.7,256.4 110.7,263.8 127.0,282.0 133.5,294.0 140.8,295.7 147.0,307.6 156.4,326.0 167.3,339.6 176.5,350.6 183.8,355.5 197.5,361.0 205.7,357.9 218.5,349.7 229.5,344.2 238.6,335.0 249.6,322.2 256.5,317.5 267.0,308.6 279.8,295.8 292.6,282.0 301.7,274.8 316.3,270.6 327.3,267.8 333.7,267.8 339.2,271.7 343.7,283.0 349.2,303.0 354.7,332.3 356.5,340.0 360.0,356.4 364.7,378.4 373.9,394.8 382.0,406.7 385.7,422.0 390.3,440.5 394.0,458.8 397.6,471.0 408.6,500.3 419.6,531.4 424.0,540.0 435.0,560.0 453.3,587.5 468.0,597.6 479.0,605.8 485.3,611.0 491.7,610.0 500.8,604.0 511.8,598.5 524.6,591.2 533.7,591.2 542.9,593.0 557.5,596.7 568.4,603.0 579.4,605.8 595.2,605.3 603.4,596.8 612.5,587.6 621.7,568.4 630.8,558.4 638.0,553.8 645.4,553.4 652.8,548.3 660.0,547.8 669.2,552.9 678.3,562.0 689.3,571.2 700.3,577.6 709.4,578.0 716.7,580.0 724.0,573.0 731.3,562.0 740.5,551.0 751.4,540.0 762.4,529.0 767.9,522.3 775.2,511.4 781.6,498.2 791.6,494.6 804.4,485.8 813.6,483.6 826.0,483.0 842.0,478.0 852.9,468.8 862.0,459.7 869.3,454.2 878.5,450.2 889.4,442.3 900.4,435.0 909.5,435.0 916.9,428.6 924.2,420.4 933.3,408.5 942.4,398.4 948.8,393.9 957.0,393.9 964.4,399.3 971.7,406.7 977.2,409.4 988.1,409.4 995.4,408.0 1021.0,408.1 1030.2,412.7 1037.5,414.3"/>
<path d="M757.0 565.8 L765.5 574.5 H761.0 V587.4 H753.0 V574.5 H748.5 Z" fill="none" stroke="#FF0000" stroke-width="1.7"/>
<path d="M1092.7 486.5 L1101.2 495.2 H1096.7 V508.1 H1088.7 V495.2 H1084.2 Z" fill="none" stroke="#FF0000" stroke-width="1.7"/>
<path d="M1084.8 335.8 L1093.5 327.1 H1088.8 V314.1 H1080.8 V327.1 H1076.1 Z" fill="none" stroke="#FF0000" stroke-width="1.7"/>
<text x="1102.5" y="340" font-size="28" fill="#000">???</text>
<path d="M1049 112 H1058 L1053.5 117 Z" fill="#B0B0B0"/>
</g>
<g shape-rendering="crispEdges">
<rect x="12" y="109" width="1305" height="1" fill="#000"/>
<rect x="12" y="109" width="1" height="567" fill="#000"/>
<rect x="1316" y="109" width="1" height="567" fill="#000"/>
<rect x="12" y="675" width="1305" height="1" fill="#000"/>
<rect x="1317" y="111" width="2" height="1" fill="#000"/>
<rect x="1317" y="144" width="2" height="1" fill="#000"/>
<rect x="1317" y="177" width="2" height="1" fill="#000"/>
<rect x="1317" y="210" width="2" height="1" fill="#000"/>
<rect x="1317" y="243" width="2" height="1" fill="#000"/>
<rect x="1317" y="276" width="2" height="1" fill="#000"/>
<rect x="1317" y="309" width="2" height="1" fill="#000"/>
<rect x="1317" y="342" width="2" height="1" fill="#000"/>
<rect x="1317" y="375" width="2" height="1" fill="#000"/>
<rect x="1317" y="408" width="2" height="1" fill="#000"/>
<rect x="1317" y="441" width="2" height="1" fill="#000"/>
<rect x="1317" y="474" width="2" height="1" fill="#000"/>
<rect x="1317" y="507" width="2" height="1" fill="#000"/>
<rect x="1317" y="540" width="2" height="1" fill="#000"/>
<rect x="1317" y="573" width="2" height="1" fill="#000"/>
<rect x="1317" y="606" width="2" height="1" fill="#000"/>
<rect x="1317" y="639" width="2" height="1" fill="#000"/>
<rect x="1317" y="672" width="2" height="1" fill="#000"/>
<rect x="13" y="676" width="1" height="4" fill="#000"/>
<rect x="77" y="676" width="1" height="4" fill="#000"/>
<rect x="141" y="676" width="1" height="4" fill="#000"/>
<rect x="205" y="676" width="1" height="4" fill="#000"/>
<rect x="269" y="676" width="1" height="4" fill="#000"/>
<rect x="333" y="676" width="1" height="4" fill="#000"/>
<rect x="397" y="676" width="1" height="4" fill="#000"/>
<rect x="461" y="676" width="1" height="4" fill="#000"/>
<rect x="525" y="676" width="1" height="4" fill="#000"/>
<rect x="589" y="676" width="1" height="4" fill="#000"/>
<rect x="653" y="676" width="1" height="4" fill="#000"/>
<rect x="717" y="676" width="1" height="4" fill="#000"/>
<rect x="781" y="676" width="1" height="4" fill="#000"/>
<rect x="845" y="676" width="1" height="4" fill="#000"/>
<rect x="909" y="676" width="1" height="4" fill="#000"/>
<rect x="973" y="676" width="1" height="4" fill="#000"/>
<rect x="1037" y="676" width="1" height="4" fill="#000"/>
</g>
<rect x="27" y="113" width="57" height="11" fill="#fff"/><rect x="88" y="113" width="143" height="11" fill="#fff"/>
<path d="M16 116 H24 L20 120.5 Z" fill="#000"/>
<g font-size="9.6" fill="#000">
<text transform="translate(28.4,121) scale(0.9375,1)">EURJPYh,H1</text>
<text transform="translate(89.7,121) scale(0.9375,1)">136.993</text>
<text transform="translate(125.7,121) scale(0.9375,1)">137.109</text>
<text transform="translate(161.9,121) scale(0.9375,1)">136.946</text>
<text transform="translate(197.5,121) scale(0.9375,1)">137.048</text>
<text transform="translate(1322.7,114) scale(0.9375,1)">140.055</text>
<text transform="translate(1322.7,147) scale(0.9375,1)">139.730</text>
<text transform="translate(1322.7,180) scale(0.9375,1)">139.410</text>
<text transform="translate(1322.7,213) scale(0.9375,1)">139.085</text>
<text transform="translate(1322.7,246) scale(0.9375,1)">138.765</text>
<text transform="translate(1322.7,279) scale(0.9375,1)">138.445</text>
<text transform="translate(1322.7,312) scale(0.9375,1)">138.120</text>
<text transform="translate(1322.7,345) scale(0.9375,1)">137.800</text>
<text transform="translate(1322.7,378) scale(0.9375,1)">137.480</text>
<text transform="translate(1322.7,411) scale(0.9375,1)">137.155</text>
<text transform="translate(1322.7,444) scale(0.9375,1)">136.835</text>
<text transform="translate(1322.7,477) scale(0.9375,1)">136.515</text>
<text transform="translate(1322.7,510) scale(0.9375,1)">136.190</text>
<text transform="translate(1322.7,543) scale(0.9375,1)">135.870</text>
<text transform="translate(1322.7,576) scale(0.9375,1)">135.545</text>
<text transform="translate(1322.7,609) scale(0.9375,1)">135.225</text>
<text transform="translate(1322.7,642) scale(0.9375,1)">134.905</text>
<text transform="translate(1322.7,675) scale(0.9375,1)">134.580</text>
<text transform="translate(12,688) scale(0.9375,1)">13 Jan 2015</text>
<text transform="translate(76,688) scale(0.9375,1)">13 Jan 23:00</text>
<text transform="translate(140,688) scale(0.9375,1)">14 Jan 07:00</text>
<text transform="translate(204,688) scale(0.9375,1)">14 Jan 15:00</text>
<text transform="translate(268,688) scale(0.9375,1)">14 Jan 23:00</text>
<text transform="translate(332,688) scale(0.9375,1)">15 Jan 07:00</text>
<text transform="translate(396,688) scale(0.9375,1)">15 Jan 15:00</text>
<text transform="translate(460,688) scale(0.9375,1)">15 Jan 23:00</text>
<text transform="translate(524,688) scale(0.9375,1)">16 Jan 07:00</text>
<text transform="translate(588,688) scale(0.9375,1)">16 Jan 15:00</text>
<text transform="translate(652,688) scale(0.9375,1)">18 Jan 23:00</text>
<text transform="translate(716,688) scale(0.9375,1)">19 Jan 07:00</text>
<text transform="translate(780,688) scale(0.9375,1)">19 Jan 15:00</text>
<text transform="translate(844,688) scale(0.9375,1)">20 Jan 00:00</text>
<text transform="translate(908,688) scale(0.9375,1)">20 Jan 08:00</text>
<text transform="translate(972,688) scale(0.9375,1)">20 Jan 16:00</text>
<text transform="translate(1036,688) scale(0.9375,1)">21 Jan 00:00</text>
</g>
<g shape-rendering="crispEdges">
<rect x="1318" y="280" width="41" height="11" fill="#0000FF"/>
<rect x="1318" y="343" width="41" height="11" fill="#0000FF"/>
<rect x="1318" y="473" width="41" height="11" fill="#0000FF"/>
<rect x="1318" y="414" width="41" height="11" fill="#000"/>
<rect x="1318" y="415" width="41" height="11" fill="#FF0000"/>
</g>
<g font-size="9.6" fill="#fff">
<text transform="translate(1322.7,289) scale(0.9375,1)">138.347</text>
<text transform="translate(1322.7,352) scale(0.9375,1)">137.733</text>
<text transform="translate(1322.7,424) scale(0.9375,1)">137.033</text>
<text transform="translate(1322.7,482) scale(0.9375,1)">136.468</text>
</g>
</svg>
<svg width="1369" height="744" viewBox="0 0 1369 744" font-family="Liberation Sans, sans-serif">
<path d="M10.300 21.200 Q9 9 17.500 8.800 Q25.500 8.800 26.200 18.800 Q22 16.800 18 18.300 Q14 19.800 12.500 21.300 Z" fill="#B22C16"/>
<path d="M20.500 11.500 Q25.800 12.500 26 18.600 Q23 17.200 20.800 17.600 Q23.500 15 20.500 11.500 Z" fill="#F2B8A8"/>
<path d="M13 11 Q17 9 21 11.500 Q17 10.800 13 13 Z" fill="#D0482A"/>
<text x="10.500" y="19.500" font-size="10.500" font-style="italic" font-family="Liberation Serif, serif" fill="#fff">fx</text>
<rect x="1273" y="12.5" width="8" height="2.5" fill="#000"/>
<rect x="1299.5" y="7.5" width="9" height="7" fill="none" stroke="#000" stroke-width="1"/><rect x="1299" y="7" width="10" height="2" fill="#000"/>
<path d="M1336 7.300 l8 8 M1344 7.300 l-8 8" stroke="#fff" stroke-width="1.700" fill="none"/>
<rect x="13.5" y="33.5" width="9" height="8" rx="1" fill="#E8F0FA" stroke="#4A78C0"/><rect x="17.5" y="38.5" width="9" height="8" rx="1" fill="#fff" stroke="#4A78C0"/>
<path d="M19 43 l1.5 2 l1.5 -3 l1.5 3 l1 -2" stroke="#4A78C0" stroke-width="0.8" fill="none"/>
<rect x="1304.5" y="33.5" width="17" height="16" fill="#DCE8F6" stroke="#8595AA"/>
<rect x="1305.5" y="34.5" width="15" height="6" fill="#F2F7FC"/>
<rect x="1323.5" y="33.5" width="17" height="16" fill="#DCE8F6" stroke="#8595AA"/>
<rect x="1324.5" y="34.5" width="15" height="6" fill="#F2F7FC"/>
<rect x="1342.5" y="33.5" width="17" height="16" fill="#DCE8F6" stroke="#8595AA"/>
<rect x="1343.5" y="34.5" width="15" height="6" fill="#F2F7FC"/>
<rect x="1309" y="43" width="6" height="2" fill="#4A5666"/>
<rect x="1330.5" y="38.5" width="5" height="4" fill="none" stroke="#4A5666"/><rect x="1328.5" y="41.5" width="5" height="4" fill="#DCE8F6" stroke="#4A5666"/>
<path d="M1348 38.5 l6 6 M1354 38.5 l-6 6" stroke="#4A5666" stroke-width="1.8"/>
<rect x="19.5" y="58.5" width="11" height="9" rx="1" fill="#EAF2FB" stroke="#3F74C4"/><path d="M22.5 60 v6 M21 61.5 l1.5 -1.5 l1.5 1.5 M21 64.5 l1.5 1.5 l1.5 -1.5" stroke="#5A7FB5" stroke-width="0.8" fill="none"/>
<path d="M28.7 62.0 h3.6 v3.7 h3.7 v3.6 h-3.7 v3.7 h-3.6 v-3.7 h-3.7 v-3.6 h3.7 z" fill="#2FC043" stroke="#0B7A1F" stroke-width="1"/>
<path d="M41 65 h5 l-2.5 3 z" fill="#000"/>
<rect x="56.5" y="58.5" width="12" height="9" rx="1" fill="#EAF2FB" stroke="#3F74C4"/><rect x="60.5" y="63.5" width="12" height="9" rx="1" fill="#F4F8FD" stroke="#3F74C4"/>
<path d="M58 63 h8 M62 68.5 h9" stroke="#5A7FB5" stroke-width="0.9"/>
<path d="M78 65 h5 l-2.5 3 z" fill="#000"/>
<rect x="100.5" y="58.5" width="15" height="15" rx="1.5" fill="#fff" stroke="#4C8EDC" stroke-width="1.3"/>
<path d="M105.5 60.5 l3.5 3.5 h-2 v3 h-3 v-3 h-2 z" fill="#1FA83A"/><path d="M110.5 72 l-3.500 -3.500 h2 v-3 h3 v3 h2 z" fill="#E8502A"/>
<circle cx="136" cy="66" r="5" fill="none" stroke="#5A5A5A" stroke-width="1.3"/><path d="M136 58.5 v5 M136 68.500 v5 M128.500 66 h5 M138.500 66 h5" stroke="#5A5A5A" stroke-width="1.3"/>
<path d="M155.5 60.5 h5 l1.500 1.500 h6 v8 h-12.500 z" fill="#F7D774" stroke="#C9A02C"/>
<path d="M167 62.500 l1.900 3.800 4.200 .6 -3 3 .7 4.200 -3.800 -2 -3.800 2 .7 -4.200 -3 -3 4.200 -.6 z" fill="#FFE14D" stroke="#C79A16" stroke-width="0.9"/>
<path d="M159.500 66 v8" stroke="#555" stroke-width="1" stroke-dasharray="1 1"/>
<rect x="184.500" y="59.500" width="15" height="13" rx="1.500" fill="#fff" stroke="#2F6FD0" stroke-width="1.400"/><rect x="185" y="60" width="3" height="12" fill="#2F6FD0"/>
<path d="M190 63.500 h8 M190 66.500 h8 M190 69.500 h8" stroke="#A9BEDD" stroke-width="1"/><path d="M189 63.500 h1.500 M189 66.500 h1.500 M189 69.500 h1.500" stroke="#D03030" stroke-width="1.200"/>
<rect x="212.500" y="58.500" width="11" height="11" fill="#F2F2F2" stroke="#9A9A9A"/><path d="M215 58 v4 M221 58 v4 M213 61 h10" stroke="#6B6B6B" stroke-width="0.9"/>
<circle cx="219" cy="66" r="4.500" fill="#CFE6FA" fill-opacity="0.85" stroke="#5B9BD8" stroke-width="1.300"/><path d="M222.500 69.500 l6 5" stroke="#D9A441" stroke-width="2.400" stroke-linecap="round"/>
<path d="M247.500 57.500 h7 l3 3 v10 h-10 z" fill="#fff" stroke="#7A7A7A"/><path d="M249.500 62 h5 M249.500 64.500 h5 M249.500 67 h3" stroke="#8A8A8A" stroke-width="0.9"/>
<path d="M254.0 63.1 h4.0 v4.2 h4.2 v4.0 h-4.2 v4.2 h-4.0 v-4.2 h-4.2 v-4.0 h4.2 z" fill="#2FC043" stroke="#0B7A1F" stroke-width="1"/>
<path d="M352.500 67 l8 -8.500 l7 5.500 l-7.500 9 z" fill="#E9B53A" stroke="#A87512"/><path d="M353 68.500 l7 5 l7.500 -8.500" fill="none" stroke="#8A5A0A" stroke-width="1.200"/><path d="M355 66.500 l6 -6" stroke="#F8DC8A" stroke-width="1.500"/>
<ellipse cx="388" cy="69" rx="6.500" ry="5" fill="#F5CC4A" stroke="#C99A22"/><ellipse cx="386.500" cy="61.500" rx="7.500" ry="3" fill="#4A9BD8"/><path d="M382 61 q4.500 -7 9 0 z" fill="#5FB0E8" stroke="#2F7FC0" stroke-width="0.8"/>
<circle cx="392" cy="70" r="4.300" fill="#E02A1F" stroke="#A01008" stroke-width="0.700"/><rect x="390.300" y="68.300" width="3.400" height="3.400" fill="#fff"/>
<path d="M507.500 60 v14 M504 71.500 h14" stroke="#4A4A4A" stroke-width="1.300" fill="none"/>
<path d="M507.500 58.500 l-2 3 h4 z M519 71.500 l-3 -2 v4 z" fill="#4A4A4A"/>
<path d="M513.500 60 v9 M513.500 61.500 h3 M511 67.500 h2.500" stroke="#1E8E3E" stroke-width="1.500" fill="none"/>
<path d="M535.500 60 v14 M532 71.500 h14" stroke="#4A4A4A" stroke-width="1.300" fill="none"/>
<path d="M535.500 58.500 l-2 3 h4 z M547 71.500 l-3 -2 v4 z" fill="#4A4A4A"/>
<path d="M543.500 58 v12" stroke="#1E5E2E" stroke-width="1"/><rect x="541.500" y="60.500" width="4" height="7" fill="#2FC043" stroke="#0B7A1F"/>
<path d="M563.500 60 v14 M560 71.500 h14" stroke="#4A4A4A" stroke-width="1.300" fill="none"/>
<path d="M563.500 58.500 l-2 3 h4 z M575 71.500 l-3 -2 v4 z" fill="#4A4A4A"/>
<path d="M564 69 q4 -11 7 -6 t3.500 3.500" stroke="#1E8E3E" stroke-width="1.300" fill="none"/>
<path d="M601 69 l6 5" stroke="#D9A441" stroke-width="2.600" stroke-linecap="round"/>
<circle cx="598" cy="64.500" r="5.500" fill="#D8ECFB" stroke="#3F8FD8" stroke-width="1.400"/>
<path d="M595 64.500 h6" stroke="#2F6FC0" stroke-width="1.600"/>
<path d="M598 61.500 v6" stroke="#2F6FC0" stroke-width="1.600"/>
<path d="M629 69 l6 5" stroke="#D9A441" stroke-width="2.600" stroke-linecap="round"/>
<circle cx="626" cy="64.500" r="5.500" fill="#D8ECFB" stroke="#3F8FD8" stroke-width="1.400"/>
<path d="M623 64.500 h6" stroke="#2F6FC0" stroke-width="1.600"/>
<rect x="648" y="58" width="8" height="8" fill="#44A83A"/><rect x="649" y="61" width="5" height="2.500" fill="#fff" fill-opacity="0.85"/>
<rect x="657" y="58" width="8" height="8" fill="#2F62C8"/><rect x="658" y="61" width="5" height="2.500" fill="#fff" fill-opacity="0.85"/>
<rect x="648" y="67" width="8" height="8" fill="#2F62C8"/><rect x="649" y="70" width="5" height="2.500" fill="#fff" fill-opacity="0.85"/>
<rect x="657" y="67" width="8" height="8" fill="#44A83A"/><rect x="658" y="70" width="5" height="2.500" fill="#fff" fill-opacity="0.85"/>
<path d="M687.500 60 v14 M684 71.500 h14" stroke="#4A4A4A" stroke-width="1.300" fill="none"/>
<path d="M687.500 58.500 l-2 3 h4 z M699 71.500 l-3 -2 v4 z" fill="#4A4A4A"/>
<path d="M692 60 l5 3 l-5 3 z" fill="#2FC043" stroke="#0B7A1F" stroke-width="0.800"/>
<path d="M715.500 60 v14 M712 71.500 h14" stroke="#4A4A4A" stroke-width="1.300" fill="none"/>
<path d="M715.500 58.500 l-2 3 h4 z M727 71.500 l-3 -2 v4 z" fill="#4A4A4A"/>
<path d="M721.500 59 v9" stroke="#1E4E9E" stroke-width="1.300"/><path d="M727 63.500 h-4 M725 61.500 l-2.500 2 l2.500 2" stroke="#D03A1A" stroke-width="1.200" fill="none"/>
<path d="M745.500 58.500 h6 l3 3 v9 h-9 z" fill="#fff" stroke="#7A7A7A"/><text x="747" y="67" font-size="8" font-style="italic" fill="#444">f</text>
<path d="M753.5 64.4 h3.6 v3.6 h3.6 v3.6 h-3.6 v3.6 h-3.6 v-3.6 h-3.6 v-3.6 h3.6 z" fill="#2FC043" stroke="#0B7A1F" stroke-width="1"/>
<path d="M766 65 h5 l-2.5 3 z" fill="#000"/>
<circle cx="789" cy="66" r="7.500" fill="#2F6FD0" stroke="#1A4FA0"/><circle cx="789" cy="66" r="5" fill="#F4F8FF"/><path d="M789 62.500 v3.500 h3" stroke="#444" stroke-width="1" fill="none"/>
<path d="M803 65 h5 l-2.5 3 z" fill="#000"/>
<rect x="817.500" y="58.500" width="16" height="14" rx="1" fill="#fff" stroke="#2F6FD0" stroke-width="1.400"/><rect x="818" y="59" width="15" height="2.500" fill="#2F6FD0"/>
<path d="M820 65 l3 -1 l3 1 l3 -1.500 l3 .5" stroke="#B02020" stroke-width="1" fill="none"/><path d="M820 70 l3 -1.500 l3 1 l3 -2 l3 1.500" stroke="#1E8E3E" stroke-width="1" fill="none"/><path d="M819 67 h13" stroke="#9AB" stroke-width="0.700"/>
<path d="M840 65 h5 l-2.5 3 z" fill="#000"/>
<circle cx="1320" cy="63" r="4" fill="#fff" stroke="#2F6FD0" stroke-width="1.500"/><path d="M1317 66.500 l-4.500 5" stroke="#2F6FD0" stroke-width="2" stroke-linecap="round"/>
<path d="M1336 58 h16 v11 h-9 l1 4 l-5 -4 h-3 z" fill="#6F87B8"/><text x="1341" y="67.500" font-size="10" font-weight="bold" fill="#fff">4</text>
<path d="M24 86 v13.500 l3.200 -3 l2.600 5.500 l2.200 -1 l-2.600 -5.500 h4.600 z" fill="#3A3A3A"/>
<path d="M56.500 86 v6 M56.500 95 v6 M49 93.500 h6 M58 93.500 h6" stroke="#3A3A3A" stroke-width="1.200"/>
<path d="M90.500 87 v13" stroke="#3A3A3A" stroke-width="1.200"/><path d="M113 93.500 h12" stroke="#3A3A3A" stroke-width="1.200"/><path d="M141 99 l12 -11" stroke="#3A3A3A" stroke-width="1.200"/>
<path d="M167 97 l14 -9 M167 101 l14 -9 M171 90 l-2 11 M175 88 l-2 11 M179 86 l-2 11" stroke="#4A4A4A" stroke-width="1" fill="none"/><text x="177.500" y="102.500" font-size="7" font-weight="bold" fill="#333">E</text>
<path d="M196 87.500 h13 M196 90.500 h13 M196 94.500 h13 M196 98.500 h9" stroke="#4A4A4A" stroke-width="1" stroke-dasharray="1 1"/><text x="205.500" y="102.500" font-size="7" font-weight="bold" fill="#333">F</text>
<text x="226.300" y="97.800" font-size="12" fill="#505050">A</text>
<rect x="252.500" y="86.500" width="13" height="13" fill="none" stroke="#555" stroke-dasharray="1 1" shape-rendering="crispEdges"/><text x="255.300" y="98" font-size="12" font-weight="bold" fill="#555">T</text>
<path d="M283.500 87 l3.300 3.300 h-6.600 z M283.500 93 l-2.500 -2.300 h5 z M291 100 l-3.300 -3.300 h6.600 z M291 94 l2.500 2.300 h-5 z" fill="#3A3A3A"/><path d="M282.500 94.500 l2 2 l6 -5" stroke="#3A3A3A" stroke-width="1.200" fill="none"/>
<path d="M299 92 h5 l-2.5 3 z" fill="#000"/>
</svg>
<div class="a" style="left:8px;top:696px;width:1353px;height:19px;background:#F0F0F0"></div>
<div class="a" style="left:8px;top:715px;width:1353px;height:2px;background:#fff"></div>
<div class="a" style="left:8px;top:696px;width:1px;height:19px;background:#696969"></div>
<div class="t tab" style="left:22.0px">USDCHFh,M30</div>
<div class="t tab" style="left:114.0px">EURUSDh,M15</div>
<div class="t tab" style="left:206.0px">GBPUSDh,H1</div>
<div class="t tab" style="left:291.0px">USDJPYh,H4</div>
<div class="t tab" style="left:458.0px">GBPCHFh,M30</div>
<div class="t tab" style="left:551.0px">AUDUSDh,H1</div>
<div class="t tab" style="left:637.0px">GBPJPYh,H4</div>
<div class="t tab" style="left:717.5px">EURGBPh,H1</div>
<div class="t tab" style="left:802.5px">USDCADh,Weekly</div>
<div class="t tab" style="left:910.0px">XAUUSDh,Daily</div>
<div class="t tab" style="left:1006.0px">USDCADh,Daily</div>
<div class="t tab" style="left:1102.5px">NZDUSDh,Daily</div>
<div class="t tab" style="left:1199.0px">AUDNZDh,Daily</div>
<div class="tsep" style="left:104px"></div>
<div class="tsep" style="left:196px"></div>
<div class="tsep" style="left:280px"></div>
<div class="tsep" style="left:540px"></div>
<div class="tsep" style="left:627px"></div>
<div class="tsep" style="left:707px"></div>
<div class="tsep" style="left:792px"></div>
<div class="tsep" style="left:901px"></div>
<div class="tsep" style="left:996px"></div>
<div class="tsep" style="left:1092px"></div>
<div class="tsep" style="left:1188px"></div>
<div class="tsep" style="left:1284px"></div>
<div class="a" style="left:364px;top:695px;width:84px;height:19px;background:#fff;border:1px solid #000;border-top:none;box-sizing:border-box;box-shadow:1px 1px 0 #D0D0D0"></div>
<div class="t tab" style="left:375px;color:#000">EURJPYh,H1</div>
<svg width="1369" height="744" viewBox="0 0 1369 744"><path d="M1332.500 705 l4 -3.500 v7 z M1354 705 l-4 -3.500 v7 z" fill="#8E8E8E"/><path d="M1347 735 l13 -13 M1351 735 l9 -9 M1355 735 l5 -5" stroke="#B4B4B4" stroke-width="1.200"/></svg>
<div class="t st" style="left:11px;letter-spacing:0.19px">Для справки, нажмите F1</div>
<div class="t st" style="left:641px;letter-spacing:0.55px">Default</div>
<div class="t st" style="left:757px">2015.01.20 13:00</div>
<div class="t st" style="left:860px">O: 137.559</div>
<div class="t st" style="left:931px">H: 137.616</div>
<div class="t st" style="left:1002px">L: 137.352</div>
<div class="t st" style="left:1070px">C: 137.510</div>
<div class="t st" style="left:1140px">V: 6646</div>
<div class="t st" style="left:1262px">1168/1 kb</div>
<div class="ssep" style="left:634px"></div>
<div class="ssep" style="left:751px"></div>
<div class="ssep" style="left:853px"></div>
<div class="ssep" style="left:924px"></div>
<div class="ssep" style="left:995px"></div>
<div class="ssep" style="left:1063px"></div>
<div class="ssep" style="left:1133px"></div>
<div class="ssep" style="left:1199px"></div>
<div class="a" style="left:1205px;top:721px;width:2px;height:8px;background:#5A8A1A"></div><div class="a" style="left:1205px;top:730px;width:2px;height:3px;background:#B02020"></div><div class="a" style="left:1208px;top:721px;width:2px;height:7px;background:#5A8A1A"></div><div class="a" style="left:1208px;top:729px;width:2px;height:4px;background:#B02020"></div><div class="a" style="left:1211px;top:721px;width:2px;height:7px;background:#5A8A1A"></div><div class="a" style="left:1211px;top:729px;width:2px;height:4px;background:#B02020"></div><div class="a" style="left:1214px;top:721px;width:2px;height:6px;background:#5A8A1A"></div><div class="a" style="left:1214px;top:728px;width:2px;height:5px;background:#B02020"></div><div class="a" style="left:1217px;top:721px;width:2px;height:5px;background:#5A8A1A"></div><div class="a" style="left:1217px;top:727px;width:2px;height:6px;background:#B02020"></div><div class="a" style="left:1220px;top:721px;width:2px;height:4px;background:#5A8A1A"></div><div class="a" style="left:1220px;top:726px;width:2px;height:7px;background:#B02020"></div><div class="a" style="left:1223px;top:721px;width:2px;height:3px;background:#5A8A1A"></div><div class="a" style="left:1223px;top:725px;width:2px;height:8px;background:#B02020"></div><div class="a" style="left:1226px;top:721px;width:2px;height:3px;background:#5A8A1A"></div><div class="a" style="left:1226px;top:725px;width:2px;height:8px;background:#B02020"></div>
<div class="a" style="left:0;top:728px;width:1366px;height:8px;background:rgba(122,72,160,0.6)"></div>
<div class="a" style="left:0;top:736px;width:1366px;height:8px;background:#8650B4"></div>
<div class="a" style="left:0;top:728px;width:8px;height:16px;background:#8650B4"></div>
<div class="a" style="left:1361px;top:728px;width:5px;height:16px;background:#8650B4"></div>
<svg width="1369" height="744" viewBox="0 0 1369 744" font-family="Liberation Sans, sans-serif">
<clipPath id="tbc"><rect x="0" y="728" width="1366" height="16"/></clipPath><g clip-path="url(#tbc)">
<rect x="176.5" y="729.5" width="57.0" height="16" fill="#fff" fill-opacity="0.18" stroke="#fff" stroke-opacity="0.35"/>
<rect x="424.5" y="729.5" width="57.0" height="16" fill="#fff" fill-opacity="0.18" stroke="#fff" stroke-opacity="0.35"/>
<rect x="486.0" y="729.5" width="57.5" height="16" fill="#fff" fill-opacity="0.18" stroke="#fff" stroke-opacity="0.35"/>
<rect x="548.0" y="729.5" width="58.0" height="16" fill="#fff" fill-opacity="0.30" stroke="#fff" stroke-opacity="0.35"/>
<rect x="610.0" y="729.5" width="57.5" height="16" fill="#fff" fill-opacity="0.18" stroke="#fff" stroke-opacity="0.35"/>
<path d="M12 739.6 L23 738 V745 H12 Z M24.200 737.8 L38 735 V745 H24.200 Z" fill="#fff"/>
<rect x="66" y="733" width="30" height="12" fill="#0E8A16"/>
<path d="M70 740.500 H91 L90 745 H71 Z" fill="#fff"/><path d="M76 741 q0 -5 4.500 -5 q4.500 0 4.500 5" fill="none" stroke="#fff" stroke-width="1.300"/>
<path d="M128 735.600 L146 733 V745 H128 Z" fill="#2B579A"/><rect x="146" y="736" width="11" height="9" fill="#fff"/><path d="M148 739.500 h8 M148 742.500 h8" stroke="#2B579A" stroke-width="1.200"/>
<path d="M132 741 l2 5 l2 -4 l2 4 l2 -5" stroke="#fff" stroke-width="1.400" fill="none"/>
<circle cx="205" cy="750" r="16" fill="#DB4437"/><path d="M205 750 L221 750 A16 16 0 0 0 213 736.150 Z" fill="#F4C20D"/><path d="M189 750 A16 16 0 0 1 192.300 740.300 L205 750 Z" fill="#0F9D58"/><circle cx="205" cy="750" r="7" fill="#fff"/>
<path d="M254 745 L252 738 L266 732.700 L275 741 L275 745 Z" fill="#A9D1F2"/><path d="M259 745 v-4 l5 -3.500 v7.500 z" fill="#4A86C8"/>
<path d="M314 745 V738 Q314 734 318 734 H336 L342 740 V745 Z" fill="#fff"/><text x="322" y="749" font-size="14" font-weight="bold" fill="#E0281A">Я</text>
<circle cx="390" cy="746" r="14.500" fill="#F6F6F6"/><path d="M379.500 735.500 L390 745 L400.500 735.500 L404 739.500 L392.500 750 V760 H387.500 V750 L376 739.500 Z" fill="#E21A1A"/>
<circle cx="452" cy="747" r="14.500" fill="#00AFF0"/><path d="M447 745 q0 -5 5.500 -5 q5 0 5.500 3" fill="none" stroke="#fff" stroke-width="2.600"/>
<rect x="499" y="731.500" width="32" height="14" fill="#fff"/><circle cx="515" cy="748" r="12" fill="#2F6FC8"/><path d="M506 745 q3 -11 14 -9 q-8 3 -7 9 z" fill="#F08A30"/>
<circle cx="575.700" cy="749" r="14" fill="#A3281A"/><ellipse cx="573" cy="741" rx="7" ry="3" fill="#C8503A" fill-opacity="0.7"/>
<circle cx="639.500" cy="746.500" r="14.500" fill="#F2A65A"/><path d="M630 741 h19 M628 744 h23" stroke="#FBD9B0" stroke-width="1.500"/>
<path d="M1160 744 l4 -4 l4 4 z" fill="#fff"/><rect x="1176" y="741" width="14" height="4" fill="#fff"/><path d="M1202 744 v-3 h3 v-1 h6 v1 h3 v3 z" fill="#fff"/><path d="M1224 744 v-3 h4 v-1 h5 v1 h4 v3 z" fill="#fff"/>
<text x="1310.500" y="745" font-size="11" fill="#fff">3:56</text>
</g></svg>
</body></html>
